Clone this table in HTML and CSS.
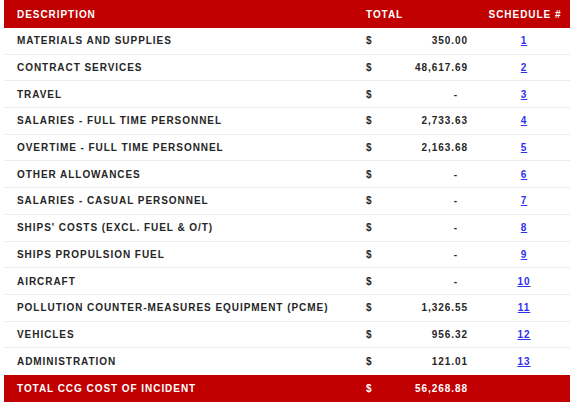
FILE: index.html
```html
<!DOCTYPE html>
<html>
<head>
<meta charset="utf-8">
<link rel="stylesheet" href="styles.css">
</head>
<body>
<table class="costs">
  <colgroup>
    <col class="c-desc"><col class="c-dollar"><col class="c-amt"><col class="c-sched">
  </colgroup>
  <thead>
    <tr class="head">
      <th class="desc">DESCRIPTION</th>
      <th class="tot" colspan="2">TOTAL</th>
      <th class="sched">SCHEDULE #</th>
    </tr>
  </thead>
  <tbody>
    <tr><td class="desc">MATERIALS AND SUPPLIES</td><td class="dollar">$</td><td class="amt">350.00</td><td class="sched"><a href="#">1</a></td></tr>
    <tr><td class="desc">CONTRACT SERVICES</td><td class="dollar">$</td><td class="amt">48,617.69</td><td class="sched"><a href="#">2</a></td></tr>
    <tr><td class="desc">TRAVEL</td><td class="dollar">$</td><td class="amt dash">-</td><td class="sched"><a href="#">3</a></td></tr>
    <tr><td class="desc">SALARIES - FULL TIME PERSONNEL</td><td class="dollar">$</td><td class="amt">2,733.63</td><td class="sched"><a href="#">4</a></td></tr>
    <tr><td class="desc">OVERTIME - FULL TIME PERSONNEL</td><td class="dollar">$</td><td class="amt">2,163.68</td><td class="sched"><a href="#">5</a></td></tr>
    <tr><td class="desc">OTHER ALLOWANCES</td><td class="dollar">$</td><td class="amt dash">-</td><td class="sched"><a href="#">6</a></td></tr>
    <tr><td class="desc">SALARIES - CASUAL PERSONNEL</td><td class="dollar">$</td><td class="amt dash">-</td><td class="sched"><a href="#">7</a></td></tr>
    <tr><td class="desc">SHIPS' COSTS (EXCL. FUEL &amp; O/T)</td><td class="dollar">$</td><td class="amt dash">-</td><td class="sched"><a href="#">8</a></td></tr>
    <tr><td class="desc">SHIPS PROPULSION FUEL</td><td class="dollar">$</td><td class="amt dash">-</td><td class="sched"><a href="#">9</a></td></tr>
    <tr><td class="desc">AIRCRAFT</td><td class="dollar">$</td><td class="amt dash">-</td><td class="sched"><a href="#">10</a></td></tr>
    <tr><td class="desc">POLLUTION COUNTER-MEASURES EQUIPMENT (PCME)</td><td class="dollar">$</td><td class="amt">1,326.55</td><td class="sched"><a href="#">11</a></td></tr>
    <tr><td class="desc">VEHICLES</td><td class="dollar">$</td><td class="amt">956.32</td><td class="sched"><a href="#">12</a></td></tr>
    <tr class="last"><td class="desc">ADMINISTRATION</td><td class="dollar">$</td><td class="amt">121.01</td><td class="sched"><a href="#">13</a></td></tr>
  </tbody>
  <tfoot>
    <tr class="foot">
      <td class="desc">TOTAL CCG COST OF INCIDENT</td>
      <td class="dollar">$</td>
      <td class="amt grand">56,268.88</td>
      <td class="sched"></td>
    </tr>
  </tfoot>
</table>
</body>
</html>
```

FILE: styles.css
```css
html, body {
  margin: 0;
  padding: 0;
  background: #ffffff;
}

body {
  padding: 0 0 0 4px;
}

.costs {
  width: 566px;
  border-collapse: collapse;
  table-layout: fixed;
  font-family: "Liberation Sans", Arial, sans-serif;
  font-weight: bold;
  font-size: 10px;
  letter-spacing: 0.95px;
  color: #262626;
}

.c-desc { width: 356px; }
.c-dollar { width: 20px; }
.c-amt { width: 96px; }
.c-sched { width: 94px; }

.costs th,
.costs td {
  padding: 0;
  white-space: nowrap;
  vertical-align: middle;
}

.head th {
  background: #c00000;
  color: #ffffff;
  height: 28px;
  text-align: left;
}

.head .desc { padding-left: 13px; }
.head .tot { padding-left: 6px; }
.head .sched { text-align: center; padding-left: 4px; }

tbody tr td {
  height: 25.7px;
  border-bottom: 1px solid #ececec;
}

tbody tr.last td {
  border-bottom: none;
  height: 26.7px;
}

td.desc { padding-left: 13px; }
td.dollar { text-align: left; padding-left: 6px; }
td.amt { text-align: right; padding-right: 8px; }
td.amt.dash { padding-right: 18px; }
td.sched { text-align: center; padding-left: 2px; }

td.sched a {
  color: #3030f0;
  text-decoration: underline;
}

.foot td {
  background: #c00000;
  color: #ffffff;
  height: 27px;
}

.foot td.grand {
  box-shadow: 0 2px 0 -1px #3a3a3a;
}
```
